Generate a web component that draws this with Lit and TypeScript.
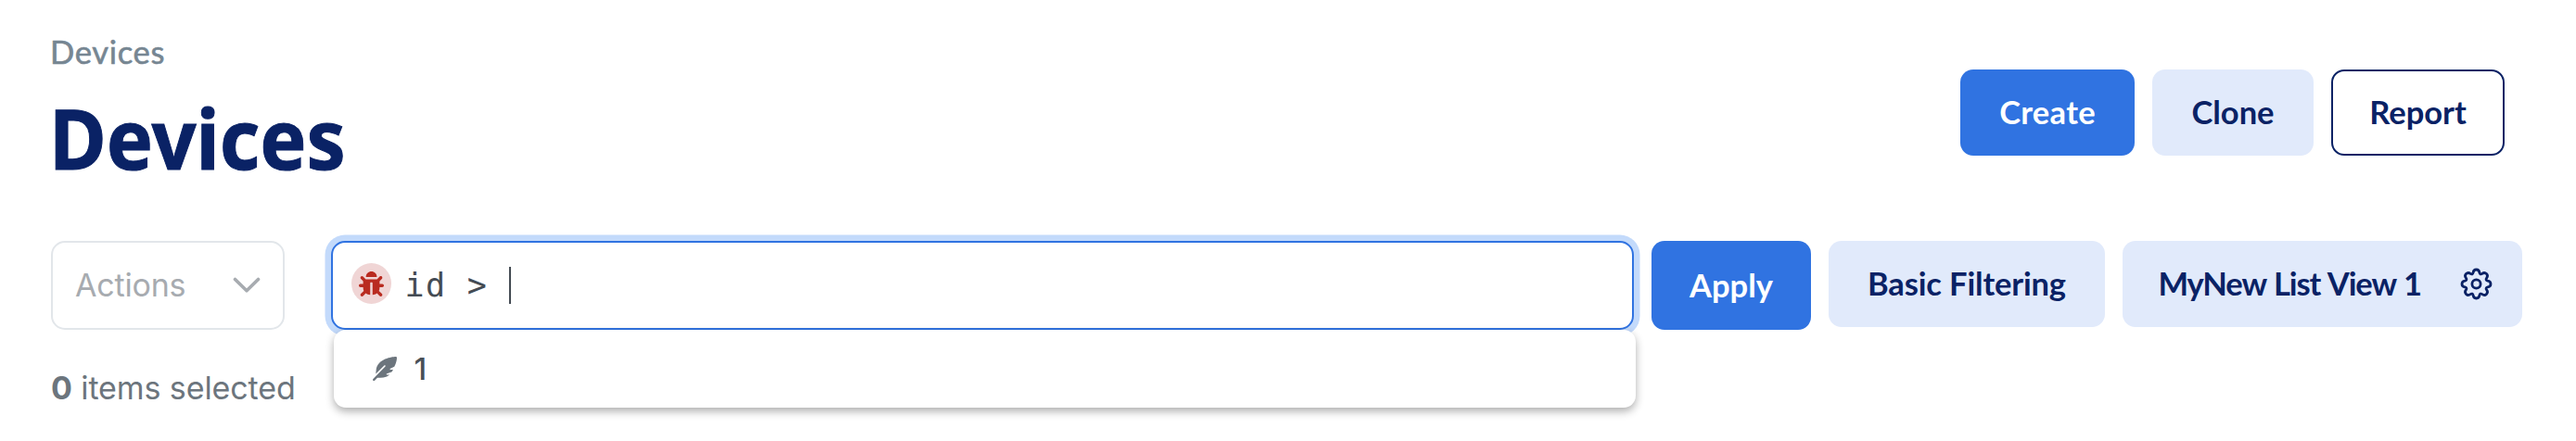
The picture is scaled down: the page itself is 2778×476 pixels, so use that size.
import { LitElement, html, css } from "lit";
import { customElement, property } from "lit/decorators.js";

@customElement("ui-button")
class UiButton extends LitElement {
  @property({ reflect: true }) variant = "soft";
  static styles = css`
    :host {
      display: flex;
      align-items: center;
      justify-content: center;
      box-sizing: border-box;
      height: 93px;
      padding-bottom: 1px;
      border-radius: 14px;
      background: #e1eafb;
      color: #0a2265;
      font: 700 34.5px/40px Lato, sans-serif;
      white-space: pre;
    }
    :host([variant="primary"]) {
      background: #3073e1;
      color: #fff;
    }
    :host([variant="outline"]) {
      background: #fff;
      border: 2px solid #0a2265;
    }
  `;
  render() {
    return html`<slot></slot>`;
  }
}

@customElement("filter-field")
class FilterField extends LitElement {
  static styles = css`
    :host {
      display: block;
      position: relative;
      box-sizing: border-box;
      height: 96px;
    }
    .box {
      display: flex;
      align-items: center;
      box-sizing: border-box;
      height: 96px;
      padding-left: 20px;
      border: 2px solid #3073e1;
      border-radius: 15px;
      background: #fff;
      box-shadow: 0 0 0 6.5px #c3dafb;
    }
    .badge {
      display: flex;
      align-items: center;
      justify-content: center;
      width: 43px;
      height: 44px;
      margin-bottom: 4px;
      border-radius: 50%;
      background: #f0d5d5;
    }
    .query {
      margin-left: 14.5px;
      font: 400 35px/40px "DejaVu Sans Mono", monospace;
      letter-spacing: 1.35px;
      color: #444b53;
      white-space: pre;
    }
    .caret {
      width: 2px;
      height: 40px;
      background: #444b53;
    }
    .menu {
      position: absolute;
      top: 96px;
      left: 3px;
      right: -2px;
      display: flex;
      align-items: center;
      box-sizing: border-box;
      height: 84px;
      padding-left: 42px;
      border-radius: 13px;
      background: #fff;
      box-shadow: 0 4px 10px rgba(0, 0, 0, 0.32);
    }
    .option {
      margin-left: 18.5px;
      font: 500 33px/40px Inter, sans-serif;
      color: #495057;
    }
  `;
  render() {
    return html`
      <div class="box">
        <span class="badge">
          <svg width="27" height="27" viewBox="0 0 512 512" fill="#b92b20">
            <path d="M511.988 288.9c-.478 17.43-15.217 31.1-32.653 31.1H424v16c0 21.864-4.882 42.584-13.6 61.145l60.228 60.228c12.496 12.497 12.496 32.758 0 45.255-12.498 12.497-32.759 12.496-45.256 0l-54.736-54.736C345.886 467.965 314.351 480 280 480V236c0-6.627-5.373-12-12-12h-24c-6.627 0-12 5.373-12 12v244c-34.351 0-65.886-12.035-90.636-32.108l-54.736 54.736c-12.498 12.497-32.759 12.496-45.256 0-12.496-12.497-12.496-32.758 0-45.255l60.228-60.228C92.882 378.584 88 357.864 88 336v-16H32.666C15.23 320 .491 306.33.013 288.9-.484 270.816 14.028 256 32 256h56v-58.745l-46.628-46.628c-12.496-12.497-12.496-32.758 0-45.255 12.498-12.497 32.758-12.497 45.256 0L141.255 160h229.489l54.627-54.627c12.498-12.497 32.758-12.497 45.256 0 12.496 12.497 12.496 32.758 0 45.255L424 197.255V256h56c17.973 0 32.485 14.816 31.988 32.9zM257 0c-61.856 0-112 50.144-112 112h224C369 50.144 318.856 0 257 0z"/>
          </svg>
        </span>
        <span class="query">id > </span>
        <span class="caret"></span>
      </div>
      <div class="menu">
        <svg width="26" height="26" viewBox="0 0 512 512" fill="#6c757d">
          <path d="M512 28C512 8 500 0 482 1C420 4 96 38 71 288c-3 26-5 50-6 76l179-179c6-6 16-6 22 0s6 16 0 22L7 471c-9 9-9 25 0 34s25 9 34 0l57-57c42 0 84-2 126-7 53-5 97-26 133-57H305c-20 0-20-20-4-26l101-33c11-15 21-31 30-47h-50c-20 0-22-20-6-28l82-40C494 150 510 70 512 28z"/>
        </svg>
        <span class="option">1</span>
      </div>
    `;
  }
}

@customElement("app-root")
class AppRoot extends LitElement {
  static styles = css`
    :host {
      display: block;
      box-sizing: border-box;
      height: 476px;
      padding: 35px 58px 0 55px;
      background: #fff;
      overflow: hidden;
    }
    .header {
      display: flex;
      justify-content: space-between;
      height: 225px;
      padding-right: 19px;
    }
    .crumb {
      margin: 1px 0 0 -1px;
      font: 400 34.5px/40px Lato, sans-serif;
      letter-spacing: 0.7px;
      color: #768692;
      -webkit-text-stroke: 0.6px #768692;
    }
    .title {
      margin: 22px 0 0 -2.5px;
      font: 700 90px/100px "Noto Sans", sans-serif;
      color: #0a2265;
      -webkit-text-stroke: 1px #0a2265;
      transform: scaleX(0.937);
      transform-origin: left;
    }
    .row {
      display: flex;
      align-items: flex-start;
      gap: 19px;
    }
    .header .row {
      padding-top: 40px;
    }
    .create { width: 188px; letter-spacing: 0.3px; }
    .clone { width: 174px; }
    .report { width: 187px; }
    .actions {
      display: flex;
      align-items: center;
      justify-content: space-between;
      box-sizing: border-box;
      width: 252px;
      height: 96px;
      margin-right: 31px;
      padding: 0 24px 0 24px;
      border: 2px solid #e2e6ea;
      border-radius: 15px;
      font: 400 34px/40px Inter, sans-serif;
      letter-spacing: -0.2px;
      color: #a7abb0;
    }
    filter-field { flex: 1; }
    .apply { width: 172px; height: 96px; }
    .basic { width: 298px; letter-spacing: -0.15px; }
    .view {
      width: 431px;
      justify-content: flex-end;
      padding-right: 32px;
      letter-spacing: -1.1px;
      word-spacing: 1.5px;
    }
    .gear { margin-left: 42px; }
    .count {
      margin-top: 43px;
      font: 400 34px/40px Inter, sans-serif;
      letter-spacing: -0.1px;
      color: #6c757d;
    }
  `;
  render() {
    return html`
      <div class="header">
        <div>
          <div class="crumb">Devices</div>
          <h1 class="title">Devices</h1>
        </div>
        <div class="row">
          <ui-button class="create" variant="primary">Create</ui-button>
          <ui-button class="clone">Clone</ui-button>
          <ui-button class="report" variant="outline">Report</ui-button>
        </div>
      </div>
      <div class="row">
        <div class="actions">
          <span>Actions</span>
          <svg width="30" height="18" viewBox="0 0 30 18" fill="none" stroke="#a7abb0" stroke-width="3.6" stroke-linecap="round" stroke-linejoin="round">
            <path d="M2.5 2.5 15 14.8 27.5 2.5"/>
          </svg>
        </div>
        <filter-field></filter-field>
        <ui-button class="apply" variant="primary">Apply</ui-button>
        <ui-button class="basic">Basic Filtering</ui-button>
        <ui-button class="view">MyNew List View 1<svg class="gear" width="35" height="35" viewBox="-17.5 -17.5 35 35" fill="none" stroke="#0a2265" stroke-width="2.8" stroke-linejoin="round">
            <circle r="4.6"/>
            <path d="M-3.4 -12.2C-2.9 -16.6 2.9 -16.6 3.4 -12.2C3.7 -10.6 5 -10.1 6.2 -11C9.7 -13.8 13.8 -9.7 11 -6.2C10.1 -5 10.6 -3.7 12.2 -3.4C16.6 -2.9 16.6 2.9 12.2 3.4C10.6 3.7 10.1 5 11 6.2C13.8 9.7 9.7 13.8 6.2 11C5 10.1 3.7 10.6 3.4 12.2C2.9 16.6 -2.9 16.6 -3.4 12.2C-3.7 10.6 -5 10.1 -6.2 11C-9.7 13.8 -13.8 9.7 -11 6.2C-10.1 5 -10.6 3.7 -12.2 3.4C-16.6 2.9 -16.6 -2.9 -12.2 -3.4C-10.6 -3.7 -10.1 -5 -11 -6.2C-13.8 -9.7 -9.7 -13.8 -6.2 -11C-5 -10.1 -3.7 -10.6 -3.4 -12.2Z"/>
          </svg></ui-button>
      </div>
      <div class="count"><b>0</b> items selected</div>
    `;
  }
}
